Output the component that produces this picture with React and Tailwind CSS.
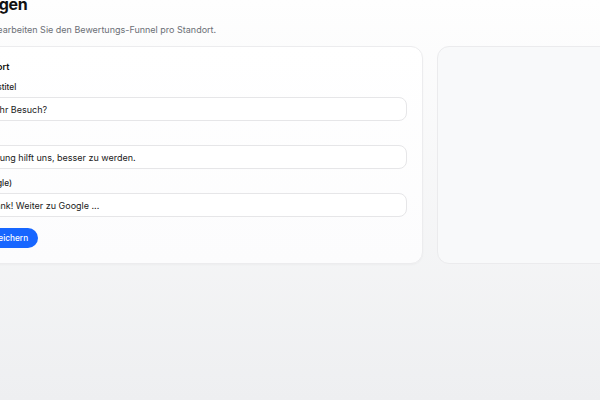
import { useState } from "react";

// Bewertungs-Funnel: Texte je Standort bearbeiten, rechts die Vorschau
export default function App() {
  const [form, setForm] = useState({
    title: "Wie war Ihr Besuch?",
    subtitle: "Ihre Meinung hilft uns, besser zu werden.",
    google: "Vielen Dank! Weiter zu Google ...",
  });

  const fields = [
    { key: "title", label: "Bestätigungstitel" },
    { key: "subtitle", label: "Untertitel" },
    { key: "google", label: "Button (Google)" },
  ];

  return (
    <div className="w-[600px] h-[400px] overflow-hidden bg-gradient-to-b from-[#fefefe] to-[#eeeff1] font-['Inter',sans-serif] text-[#111]">
      <div className="-ml-[66px] -mt-[6px] w-[900px]">
        <h1 className="text-[16px] leading-5 font-bold tracking-[-0.35px]">Einladungen</h1>
        <p className="mt-[10px] text-[9px] leading-3 text-[#6b6f76]">
          Erstellen und bearbeiten Sie den Bewertungs-Funnel pro Standort.
        </p>

        <div className="mt-[10px] flex gap-[14px]">
          <div className="w-[489px] rounded-xl border border-[#ececee] bg-gradient-to-b from-white to-[#fcfcfd] px-[15px] pt-[13px] pb-[14px] shadow-[0_1px_2px_rgba(0,0,0,0.03)]">
            <h2 className="text-[9px] leading-[14px] font-semibold">Zum Standort</h2>
            <div className="mt-[7px] flex flex-col gap-2">
              {fields.map((f) => (
                <label key={f.key} className="flex flex-col gap-1">
                  <span className="text-[8.25px] leading-3 font-medium text-[#222]">{f.label}</span>
                  <input
                    value={form[f.key]}
                    onChange={(e) => setForm({ ...form, [f.key]: e.target.value })}
                    className="h-6 rounded-lg border border-[#e6e6e8] bg-white px-[9px] text-[9px] text-[#1a1a1a] outline-none"
                  />
                </label>
              ))}
            </div>
            <button className="mt-[11px] h-5 rounded-full bg-[#1766ff] px-[10px] text-[8.25px] leading-5 font-medium text-white">
              Inhalte speichern
            </button>
          </div>

          <div className="w-[300px] h-[218px] rounded-xl border border-[#ebebed] bg-[#f8f9fa]" />
        </div>
      </div>
    </div>
  );
}
